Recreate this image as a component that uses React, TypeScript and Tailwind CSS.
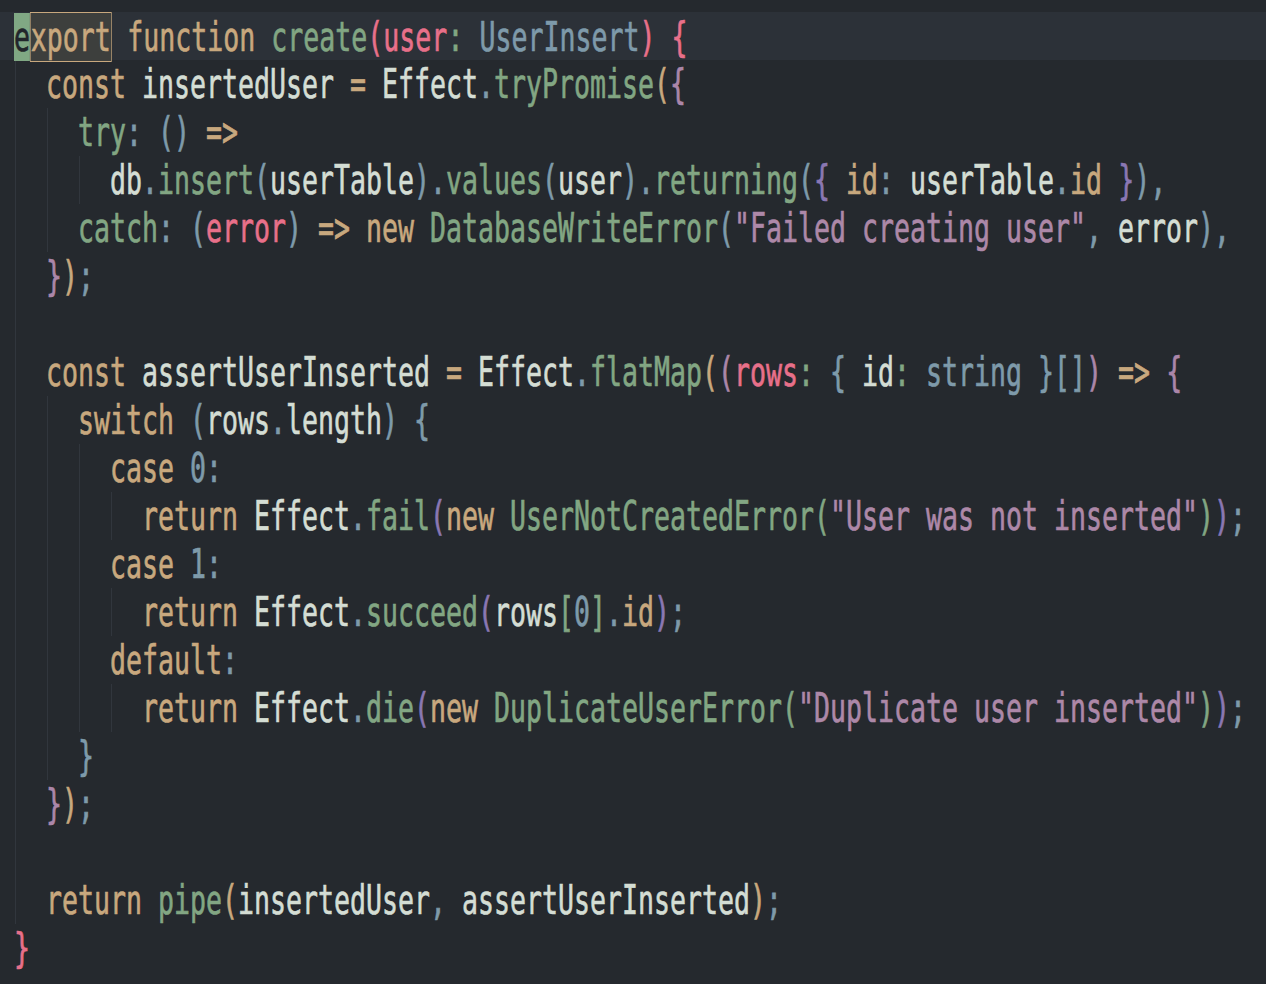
import React from "react";

type Tok = [string, string];

const C: Record<string, string> = {
  k: "text-[#c8a87e]",
  f: "text-[#82a683]",
  v: "text-[#d4ddd4]",
  p: "text-[#e8708a]",
  t: "text-[#7e9aaa]",
  s: "text-[#ad88a8]",
  m: "text-[#ab86a9]",
  u: "text-[#8a77b3]",
};

const lines: { indent: number; toks: Tok[] }[] = [
  { indent: 0, toks: [] },
  {
    indent: 1,
    toks: [["k", "const"], ["v", " insertedUser "], ["k", "="], ["v", " Effect"], ["t", "."], ["f", "tryPromise"], ["k", "("], ["m", "{"]],
  },
  { indent: 2, toks: [["f", "try"], ["t", ":"], ["v", " "], ["t", "()"], ["v", " "], ["k", "=>"]] },
  {
    indent: 3,
    toks: [
      ["v", "db"], ["t", "."], ["f", "insert"], ["t", "("], ["v", "userTable"], ["t", ")."], ["f", "values"], ["t", "("], ["v", "user"], ["t", ")."], ["f", "returning"], ["t", "("], ["u", "{"], ["v", " "], ["k", "id"], ["t", ":"], ["v", " userTable"], ["t", "."], ["k", "id"], ["v", " "], ["u", "}"], ["t", "),"],
    ],
  },
  {
    indent: 2,
    toks: [
      ["f", "catch"], ["t", ":"], ["v", " "], ["t", "("], ["p", "error"], ["t", ")"], ["v", " "], ["k", "=>"], ["v", " "], ["k", "new"], ["v", " "], ["f", "DatabaseWriteError"], ["t", "("], ["s", "\"Failed creating user\""], ["t", ","], ["v", " error"], ["t", "),"],
    ],
  },
  { indent: 1, toks: [["m", "}"], ["k", ")"], ["t", ";"]] },
  { indent: 1, toks: [] },
  {
    indent: 1,
    toks: [
      ["k", "const"], ["v", " assertUserInserted "], ["k", "="], ["v", " Effect"], ["t", "."], ["f", "flatMap"], ["k", "("], ["m", "("], ["p", "rows"], ["f", ":"], ["v", " "], ["t", "{"], ["v", " id"], ["f", ":"], ["v", " "], ["t", "string"], ["v", " "], ["t", "}[]"], ["m", ")"], ["v", " "], ["k", "=>"], ["v", " "], ["m", "{"],
    ],
  },
  {
    indent: 2,
    toks: [["k", "switch"], ["v", " "], ["t", "("], ["v", "rows"], ["t", "."], ["v", "length"], ["t", ")"], ["v", " "], ["t", "{"]],
  },
  { indent: 3, toks: [["k", "case"], ["v", " "], ["t", "0:"]] },
  {
    indent: 4,
    toks: [
      ["k", "return"], ["v", " Effect"], ["t", "."], ["f", "fail"], ["u", "("], ["k", "new"], ["v", " "], ["f", "UserNotCreatedError("], ["s", "\"User was not inserted\""], ["f", ")"], ["u", ")"], ["t", ";"],
    ],
  },
  { indent: 3, toks: [["k", "case"], ["v", " "], ["t", "1:"]] },
  {
    indent: 4,
    toks: [
      ["k", "return"], ["v", " Effect"], ["t", "."], ["f", "succeed"], ["u", "("], ["v", "rows"], ["f", "["], ["t", "0"], ["f", "]"], ["t", "."], ["k", "id"], ["u", ")"], ["t", ";"],
    ],
  },
  { indent: 3, toks: [["k", "default"], ["t", ":"]] },
  {
    indent: 4,
    toks: [
      ["k", "return"], ["v", " Effect"], ["t", "."], ["f", "die"], ["u", "("], ["k", "new"], ["v", " "], ["f", "DuplicateUserError("], ["s", "\"Duplicate user inserted\""], ["f", ")"], ["u", ")"], ["t", ";"],
    ],
  },
  { indent: 2, toks: [["t", "}"]] },
  { indent: 1, toks: [["m", "}"], ["k", ")"], ["t", ";"]] },
  { indent: 1, toks: [] },
  {
    indent: 1,
    toks: [["k", "return"], ["v", " "], ["f", "pipe"], ["k", "("], ["v", "insertedUser"], ["t", ","], ["v", " assertUserInserted"], ["k", ")"], ["t", ";"]],
  },
  { indent: 0, toks: [["p", "}"]] },
];

const textCls =
  "inline-block whitespace-pre text-[40px] leading-[48px] origin-left scale-x-[0.6644] font-['DejaVu_Sans_Mono',monospace] [-webkit-text-stroke:0.7px_currentColor]";

function Guides({ n }: { n: number }) {
  return (
    <>
      {Array.from({ length: n }).map((_, i) => (
        <span key={i} className="flex h-[48px] w-[32px] shrink-0">
          <span className="ml-px h-full w-px bg-[#31363d]" />
        </span>
      ))}
    </>
  );
}

function FirstLine() {
  return (
    <div className="flex h-[48px] bg-[#2c3138] pl-[14px]">
      <span className={textCls}>
        <span className="inline-block bg-[#80a884] text-[#22262b]">e</span>
        <span className="inline-block border-y border-x-[1.5px] border-[#c8a87e] bg-[#3d3f3d] text-[#c8a87e]">
          xport
        </span>
        <span className="text-[#d4ddd4]"> </span>
        <span className={C.k}>function</span>
        <span className="text-[#d4ddd4]"> </span>
        <span className={C.f}>create</span>
        <span className={C.p}>(user</span>
        <span className={C.f}>:</span>
        <span className={C.t}> UserInsert</span>
        <span className={C.p}>) {"{"}</span>
      </span>
    </div>
  );
}

export default function App() {
  return (
    <div className="h-[984px] w-full overflow-hidden bg-[#25292e] pt-[12px]">
      <FirstLine />
      {lines.slice(1).map((ln, i) => (
        <div key={i} className="flex h-[48px] pl-[14px]">
          <Guides n={ln.indent} />
          <span className={textCls}>
            {ln.toks.map(([c, s], j) => (
              <span key={j} className={C[c]}>
                {s}
              </span>
            ))}
          </span>
        </div>
      ))}
    </div>
  );
}
